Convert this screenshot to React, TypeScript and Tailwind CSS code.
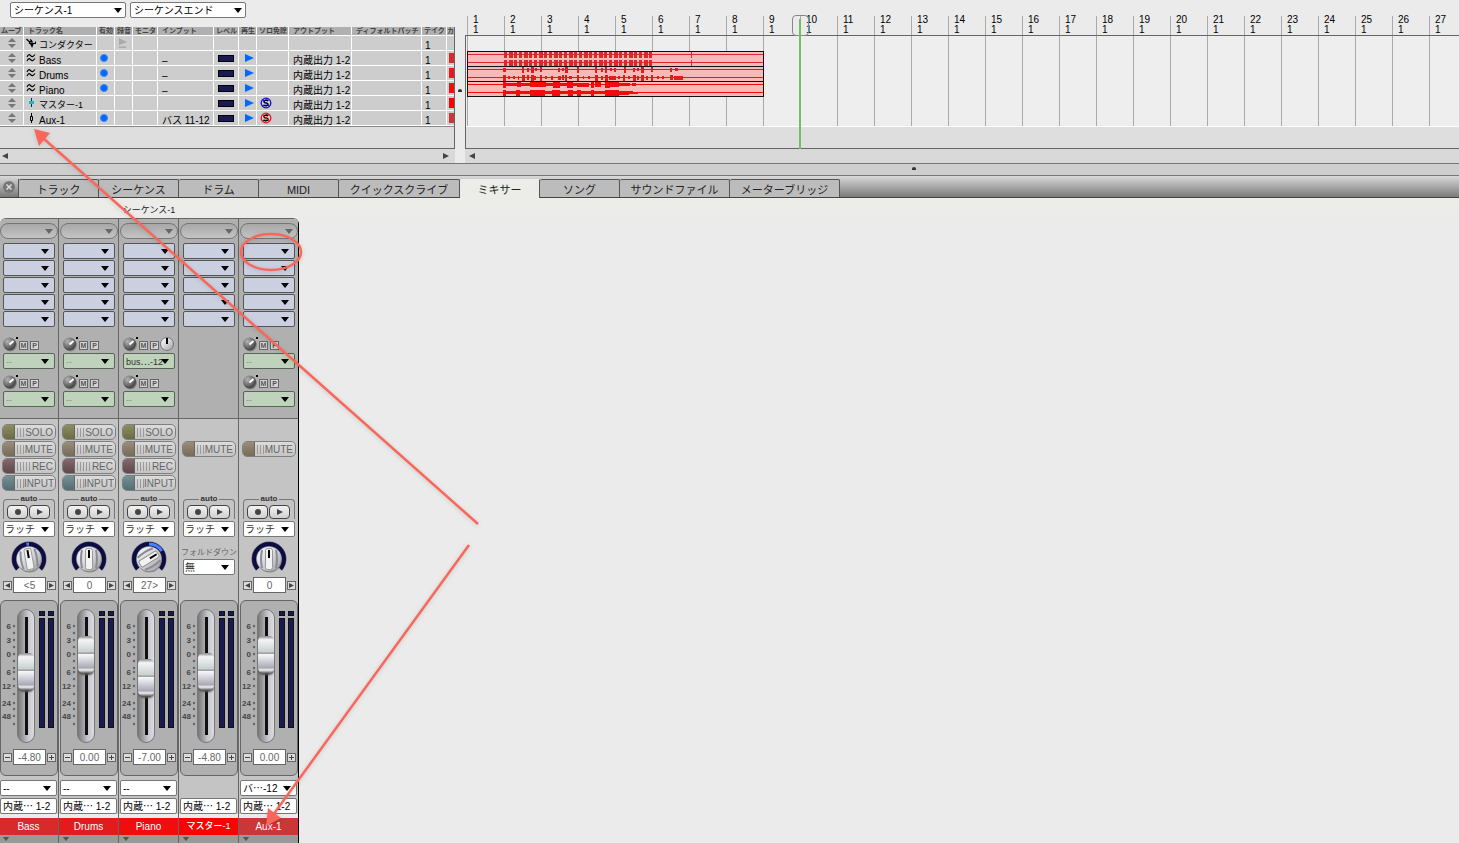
import React from 'react';

type Track = {
  name: string;
  icon: 'conductor' | 'wave' | 'master' | 'aux';
  small?: boolean;
  enabled?: boolean;
  input?: string;
  solo?: string;
  output?: string;
  color?: string;
};

type Strip = {
  name: string;
  small?: boolean;
  color: string;
  sends: string[];
  meterSend?: boolean;
  buttons: string[];
  pan?: { text: string; angle: number };
  fader: number;
  gain: string;
  source?: string;
};

const columns = [
  { label: 'ムーブ', style: 'w-[24px] pl-[1px]' },
  { label: 'トラック名', style: 'w-[73px] pl-[4px]' },
  { label: '有効', style: 'w-[18px] pl-[2px]' },
  { label: '録音', style: 'w-[18px] pl-[2px]' },
  { label: 'モニタ', style: 'w-[25px] pl-[2px]' },
  { label: 'インプット', style: 'w-[56px] pl-[4px]' },
  { label: 'レベル', style: 'w-[25px] pl-[2px]' },
  { label: '再生', style: 'w-[18px] pl-[2px]' },
  { label: 'ソロ免除', style: 'w-[32px] pl-[2px]' },
  { label: 'アウトプット', style: 'w-[63px] pl-[4px]' },
  { label: 'ディフォルトパッチ', style: 'w-[70px] pl-[4px]' },
  { label: 'テイク', style: 'w-[25px] pl-[2px]' },
  { label: 'カ', style: 'w-[7px]' },
];

const tracks: Track[] = [
  { name: 'コンダクター', icon: 'conductor', small: true },
  { name: 'Bass', icon: 'wave', enabled: true, input: '–', output: '内蔵出力 1-2', color: 'bg-[#d82a2a]' },
  { name: 'Drums', icon: 'wave', enabled: true, input: '–', output: '内蔵出力 1-2', color: 'bg-[#e31b1b]' },
  { name: 'Piano', icon: 'wave', enabled: true, input: '–', output: '内蔵出力 1-2', color: 'bg-[#f20d0d]' },
  { name: 'マスター-1', icon: 'master', small: true, solo: '#0a0ae0', output: '内蔵出力 1-2', color: 'bg-[#ff0000]' },
  { name: 'Aux-1', icon: 'aux', enabled: true, input: 'バス 11-12', solo: '#f01010', output: '内蔵出力 1-2', color: 'bg-[#cb3636]' },
];

const tabs = [
  { label: 'トラック', width: 'w-[80px]' },
  { label: 'シーケンス', width: 'w-[80px]' },
  { label: 'ドラム', width: 'w-[80px]' },
  { label: 'MIDI', width: 'w-[80px]' },
  { label: 'クイックスクライブ', width: 'w-[121px]' },
  { label: 'ミキサー', width: 'w-[80px]' },
  { label: 'ソング', width: 'w-[80px]' },
  { label: 'サウンドファイル', width: 'w-[110px]' },
  { label: 'メーターブリッジ', width: 'w-[110px]' },
];

const allButtons = ['SOLO', 'MUTE', 'REC', 'INPUT'];

const strips: Strip[] = [
  { name: 'Bass', color: 'bg-[#d82a2a]', sends: ['--', '--'], buttons: allButtons, pan: { text: '<5', angle: -10 }, fader: 51, gain: '-4.80', source: '--' },
  { name: 'Drums', color: 'bg-[#e31b1b]', sends: ['--', '--'], buttons: allButtons, pan: { text: '0', angle: 0 }, fader: 68, gain: '0.00', source: '--' },
  { name: 'Piano', color: 'bg-[#f20d0d]', sends: ['bus⋯-12', '--'], meterSend: true, buttons: allButtons, pan: { text: '27>', angle: 58 }, fader: 45, gain: '-7.00', source: '--' },
  { name: 'マスター-1', small: true, color: 'bg-[#ff0000]', sends: [], buttons: ['MUTE'], fader: 51, gain: '-4.80' },
  { name: 'Aux-1', color: 'bg-[#cb3636]', sends: ['--', '--'], buttons: ['MUTE'], pan: { text: '0', angle: 0 }, fader: 68, gain: '0.00', source: 'バ⋯-12' },
];

const lamps: Record<string, string> = {
  SOLO: 'from-[#8d8d60] to-[#6c6c44]',
  MUTE: 'from-[#9a8d78] to-[#776b58]',
  REC: 'from-[#86696c] to-[#60474a]',
  INPUT: 'from-[#769196] to-[#536d72]',
};

const ridges: Record<string, number[]> = {
  SOLO: [1, 4, 7],
  MUTE: [1, 4, 7],
  REC: [1, 4, 7, 10, 13],
  INPUT: [1, 4, 7],
};

const measures = Array.from({ length: 27 }, (_, i) => i + 1);

function Triangle({ className }: { className: string }) {
  return (
    <svg className={className} width="8" height="5" viewBox="0 0 8 5" aria-hidden="true">
      <path d="M0 0H8L4 5Z" fill="currentColor" />
    </svg>
  );
}

function Dropdown({
  label,
  value,
  className,
  text = 'text-[10px]',
  arrow = 'text-black right-[6px]',
}: {
  label: string;
  value: string;
  className: string;
  text?: string;
  arrow?: string;
}) {
  return (
    <div className="relative">
      <select aria-label={label} className={`block h-4 w-full appearance-none border pt-[2px] leading-[12px] outline-none ${text} ${className}`}>
        <option>{value}</option>
      </select>
      <Triangle className={`pointer-events-none absolute top-[6px] ${arrow}`} />
    </div>
  );
}

function TrackIcon({ kind }: { kind: Track['icon'] }) {
  return (
    <svg className="mb-[2px] shrink-0" width="10" height="10" viewBox="0 0 10 10" fill="none" aria-hidden="true">
      {kind === 'conductor' && (
        <path d="M0.500 1L3 3.500M6 3V8.500M4 4.500L6 8.500L7.500 5M7 5.500H9.500V3.500M4 1.500L6 3M3.500 3.500H6V5.500H3.500Z" stroke="#000" strokeWidth="1.200" />
      )}
      {kind === 'wave' && (
        <path d="M1 4C3 0 4 2 5 3S7 4 9 1.500M1 8C3 4 4 6 5 7S7 8 9 5.500" stroke="#000" strokeWidth="1.200" />
      )}
      {kind === 'master' && (
        <>
          <path d="M5.500 0V9" stroke="#033" />
          <path d="M3 3H8V6H3Z" fill="#12b8dc" />
        </>
      )}
      {kind === 'aux' && (
        <>
          <path d="M5.500 0V10" stroke="#000" />
          <path d="M4.500 3.500H6.500V7.500H4.500Z" fill="#ccc" stroke="#000" />
        </>
      )}
    </svg>
  );
}

function SoloIcon({ color }: { color: string }) {
  return (
    <svg className="ml-[3px] block" width="12" height="12" viewBox="0 0 12 12" aria-hidden="true">
      <circle cx="6" cy="6" r="4.800" fill="#d8d8d8" stroke={color} strokeWidth="1.300" />
      <path d="M8.400 3.800C6.500 2.600 3.700 3.200 4 4.800S8.100 5.800 8 7.300S5 9 3.400 8" fill="none" stroke="#000" strokeWidth="1.600" />
      <path d="M2.500 2.500L9.500 9.500" stroke={color} />
    </svg>
  );
}

function TrackRow({ track }: { track: Track }) {
  const td = 'h-[15px] border-r border-b border-white p-0 align-bottom';
  const mid = 'h-[15px] border-r border-b border-white p-0 align-middle';
  const audio = track.icon !== 'conductor';
  return (
    <tr>
      <td className={mid}>
        <svg className="mx-auto block" width="8" height="10" viewBox="0 0 8 10" aria-hidden="true">
          <path d="M4 0L8 4H0ZM4 10L8 6H0Z" fill="#777" />
        </svg>
      </td>
      <td className={td}>
        <div className="flex items-end gap-[3px] pl-[2px] whitespace-nowrap">
          <TrackIcon kind={track.icon} />
          <span className={track.small ? 'text-[9px]' : 'text-[10px]'}>{track.name}</span>
        </div>
      </td>
      <td className={mid}>
        {track.enabled && <div className="ml-[3px] size-[8px] rounded-full border border-[#3c86f0] bg-[#0068ff]" />}
      </td>
      <td className={mid}>
        {!audio && (
          <svg className="ml-[4px] block" width="8" height="10" viewBox="0 0 8 10" aria-hidden="true">
            <path d="M0 0L8 4L0 7ZM0 8.500H7V10H0Z" fill="#aaa" />
          </svg>
        )}
      </td>
      <td className={td} />
      <td className={`${td} pl-[4px] whitespace-nowrap`}>{track.input}</td>
      <td className={mid}>
        {audio && <div className="mx-auto h-[7px] w-4 border border-black bg-[#1a1a52]" />}
      </td>
      <td className={mid}>
        {audio && (
          <svg className="ml-[6px] block" width="9" height="8" viewBox="0 0 9 8" aria-hidden="true">
            <path d="M0 0L9 4L0 8Z" fill="#0068ff" />
          </svg>
        )}
      </td>
      <td className={mid}>{track.solo && <SoloIcon color={track.solo} />}</td>
      <td className={`${td} pl-[4px] whitespace-nowrap`}>{track.output}</td>
      <td className={td} />
      <td className={`${td} pl-[3px]`}>1</td>
      <td className="h-[15px] border-b border-white p-0 align-middle">
        {track.color && <div className={`ml-[2px] h-[10px] w-[5px] ${track.color}`} />}
      </td>
    </tr>
  );
}

function TrackList() {
  return (
    <section className="w-[455px] shrink-0">
      <div className="flex h-[27px] gap-1 pt-[2px] pl-[10px]">
        <div className="w-[116px]">
          <Dropdown label="シーケンス" value="シーケンス-1" className="rounded-xs border-[#777] bg-white pl-[3px]" arrow="text-black right-[4px]" />
        </div>
        <div className="w-[116px]">
          <Dropdown label="位置" value="シーケンスエンド" className="rounded-xs border-[#777] bg-white pl-[3px]" arrow="text-black right-[4px]" />
        </div>
      </div>
      <div className="border-r border-b border-[#666] bg-[#dedede]">
        <table className="w-full table-fixed border-separate border-spacing-0 bg-[#cdcdcd] text-[10px] leading-[9px]">
          <thead>
            <tr className="bg-[#b0b0b0]">
              {columns.map((c) => (
                <th
                  key={c.label}
                  className={`h-[9px] border-r border-b border-white py-0 pr-0 text-left text-[7px] leading-[8px] font-bold whitespace-nowrap text-[#444] last:border-r-0 last:pl-0 ${c.style}`}
                >
                  {c.label}
                </th>
              ))}
            </tr>
          </thead>
          <tbody>
            {tracks.map((t) => (
              <TrackRow key={t.name} track={t} />
            ))}
          </tbody>
        </table>
        <div className="h-[22px] border-t border-[#888]" />
      </div>
      <div className="flex h-[14px] items-center justify-between bg-[#d9d9d9] pr-[6px] pl-[2px]">
        <button aria-label="左へスクロール" className="block">
          <svg className="block" width="6" height="6" viewBox="0 0 6 6"><path d="M6 0V6L0 3Z" fill="#444" /></svg>
        </button>
        <button aria-label="右へスクロール" className="block">
          <svg className="block" width="6" height="6" viewBox="0 0 6 6"><path d="M0 0V6L6 3Z" fill="#444" /></svg>
        </button>
      </div>
    </section>
  );
}

// [x, width, height] of every hit in a channel
const bassHits = Array.from({ length: 30 }, (_, i) => [37 + i * 5, i % 3 === 1 ? 4 : 3, i % 2 ? 6 : 8]);
const drumsTop = [
  [36, 3, 4], [55, 2, 6], [60, 2, 4], [64, 3, 7], [68, 2, 3], [73, 2, 5], [91, 2, 4], [95, 2, 3], [98, 3, 6], [110, 2, 6],
  [128, 2, 7], [134, 2, 4], [138, 2, 6], [143, 2, 3], [147, 2, 4], [157, 2, 6], [166, 2, 4], [170, 2, 3], [174, 3, 6],
  [184, 2, 5], [203, 2, 4], [208, 3, 3],
];
const drumsLow = [
  [36, 3, 6], [41, 2, 3], [46, 2, 3], [51, 1, 4], [55, 3, 7], [60, 2, 5], [64, 3, 8], [67, 2, 4], [73, 2, 6], [78, 2, 3],
  [84, 2, 4], [91, 3, 4], [95, 2, 5], [98, 2, 8], [102, 3, 3], [110, 2, 7], [116, 1, 3], [121, 2, 3], [128, 3, 7], [134, 2, 4],
  [138, 3, 6], [142, 7, 4], [151, 2, 3], [156, 2, 7], [161, 2, 3], [166, 3, 6], [170, 2, 4], [174, 3, 8], [179, 2, 4],
  [184, 2, 6], [190, 2, 3], [195, 2, 3], [203, 3, 5], [207, 9, 4],
];
const pianoTop = [
  [36, 86, 3], [36, 3, 6], [50, 4, 5], [63, 7, 5], [70, 9, 5], [86, 7, 6], [100, 6, 6], [110, 12, 4], [124, 3, 6], [128, 6, 5],
  [138, 5, 7], [143, 9, 5], [152, 11, 3], [165, 4, 3],
];
const pianoLow = [
  [36, 130, 3], [36, 3, 6], [49, 4, 6], [63, 4, 8], [67, 11, 7], [85, 8, 7], [101, 5, 6], [110, 4, 6], [124, 3, 6],
  [138, 5, 8], [143, 9, 6], [152, 10, 4], [162, 9, 2],
];

const clips = [
  { color: '#d82a2a', top: [...bassHits, [224, 1, 7]], low: [...bassHits, [224, 1, 7]] },
  { color: '#e31b1b', top: drumsTop, low: drumsLow },
  { color: '#f20d0d', top: pianoTop, low: pianoLow },
];

function Clips() {
  return (
    <svg className="absolute top-[15px] left-[1px]" width="297" height="46" viewBox="0 0 297 46" shapeRendering="crispEdges" aria-label="オーディオクリップ">
      {clips.map((clip, i) => (
        <g key={clip.color} transform={`translate(0 ${i * 15})`}>
          <rect x="0.500" y="0.500" width="296" height="15" fill="#f8b9b9" stroke="#111" />
          {[clip.top, clip.low].map((hits, ch) => (
            <g key={ch} transform={`translate(0 ${ch ? 11 : 3})`} fill={clip.color}>
              <rect x="1" y="0" width="295" height="1" />
              {hits.map(([x, w, h], n) => (
                <rect key={n} x={x} y={Math.max(-2, 1 - Math.ceil(h / 2))} width={w} height={Math.min(h, 6)} />
              ))}
            </g>
          ))}
        </g>
      ))}
    </svg>
  );
}

function Timeline() {
  return (
    <section className="relative min-w-0 flex-1 overflow-hidden">
      <div className="flex h-[35px] items-end pl-[2px]">
        {measures.map((m) => (
          <div key={m} className="flex h-[19px] w-[37px] shrink-0 flex-col justify-end border-l border-[#aaa] pl-[5px] text-[10px] leading-[10px]">
            <span>{m}</span>
            <span>1</span>
          </div>
        ))}
      </div>
      <div className="border-y border-l border-[#666] bg-[#dedede]">
        <div className="relative flex h-[90px] overflow-hidden bg-[#eeeeee] pl-[1px]">
          {measures.map((m) => (
            <div key={m} className="w-[37px] shrink-0 border-l border-[#aaa]" />
          ))}
          <Clips />
        </div>
        <div className="h-[22px] border-t border-white" />
      </div>
      <div className="flex h-[14px] items-center bg-[#d9d9d9] pl-[4px]">
        <button aria-label="左へスクロール" className="block">
          <svg className="block" width="6" height="6" viewBox="0 0 6 6"><path d="M6 0V6L0 3Z" fill="#444" /></svg>
        </button>
      </div>
      <div className="absolute top-[15px] left-[327px] h-[21px] w-[17px] rounded-sm border border-[#888]" />
      <div className="absolute top-[19px] left-[334px] h-[130px] w-[2px] bg-[#6fc25a]" />
    </section>
  );
}

function TabBar() {
  return (
    <nav className="flex h-[22px] items-end border-b border-[#444] bg-linear-to-b from-[#dadada] to-[#7b7b7b]">
      <button aria-label="閉じる" className="mb-[4px] ml-[3px] flex w-[15px] shrink-0">
        <svg width="12" height="12" viewBox="0 0 12 12">
          <circle cx="6" cy="6" r="6" fill="#777" />
          <path d="M3.500 3.500L8.500 8.500M8.500 3.500L3.500 8.500" stroke="#ddd" strokeWidth="1.500" />
        </svg>
      </button>
      <div role="tablist" className="flex border-l border-[#555]">
        {tabs.map((t) => (
          <button
            key={t.label}
            role="tab"
            aria-selected={t.label === 'ミキサー'}
            className={`${t.width} shrink-0 rounded-t-xs border-t border-r pt-px text-[11px] leading-[18px] text-[#222] ${
              t.label === 'ミキサー' ? '-mb-px h-[19px] border-t-[#ecede8] border-r-[#555] bg-[#ecede8]' : 'h-[18px] border-[#555] bg-[#bcbcbc]'
            }`}
          >
            {t.label}
          </button>
        ))}
      </div>
    </nav>
  );
}

function Send({ value, meter }: { value: string; meter: boolean }) {
  const box = 'mt-[4px] flex size-[9px] items-center justify-center border border-[#666] bg-[#d4d4d4] text-[7px] leading-none font-bold text-[#555]';
  return (
    <div className="w-[52px]">
      <div className="flex h-4 gap-[2px]">
        <svg className="-mr-px block" width="15" height="15" viewBox="0 0 15 15" aria-hidden="true">
          <circle cx="7.500" cy="8" r="6.500" fill="#888" />
          <circle cx="6.500" cy="7" r="6.500" fill="url(#knob)" />
          <path d="M6.500 7.500L10.500 4" stroke="#fff" strokeWidth="2" />
          <rect x="13" y="0" width="2" height="2" fill="#000" />
        </svg>
        <button className={box}>M</button>
        <button className={box}>P</button>
        {meter && (
          <svg className="-ml-px block" width="14" height="14" viewBox="0 0 14 14" aria-hidden="true">
            <circle cx="7" cy="7" r="6.500" fill="url(#dial)" stroke="#777" />
            <path d="M7 1V7" stroke="#000" strokeWidth="2" />
          </svg>
        )}
      </div>
      <Dropdown
        label="センド"
        value={value}
        text="text-[9px]"
        className={`rounded-xs border-[#556655] bg-[#bfd2bb] pl-[2px] ${value === '--' ? 'text-[#8a988a]' : 'text-[#333]'}`}
      />
    </div>
  );
}

function ChannelButton({ label }: { label: string }) {
  return (
    <button className="flex h-4 w-[54px] items-stretch overflow-hidden rounded-[5px] border border-[#808080] bg-linear-to-b from-[#dcdcdc] to-[#c4c4c4]">
      <span className={`w-[12px] shrink-0 border-r border-[#666] bg-linear-to-b ${lamps[label]}`} />
      <svg className="shrink-0 self-center" width={label === 'REC' ? 16 : 9} height="9" aria-hidden="true">
        {ridges[label].map((x) => (
          <path key={x} d={`M${x + 1.500} 0V9`} stroke="#999" />
        ))}
      </svg>
      <span className="flex-1 self-center pt-px pr-[2px] text-right text-[10px] leading-[13px] text-[#666]">{label}</span>
    </button>
  );
}

function AutoGroup() {
  const button = 'flex h-[14px] w-[21px] items-center justify-center rounded-sm border border-[#444] bg-linear-to-b from-[#f2f2f2] to-[#d0d0d0]';
  return (
    <fieldset className="mx-[3px] mt-[4px] h-[24px] w-[52px] min-w-0 rounded-t-sm border border-b-0 border-[#777] px-[3px]">
      <legend className="mx-auto px-[2px] text-[8px] leading-[8px] font-bold text-[#333]">auto</legend>
      <div className="flex gap-px pt-[2px]">
        <button aria-label="オート録音" className={button}>
          <svg width="6" height="6" viewBox="0 0 6 6"><circle cx="3" cy="3" r="3" fill="#444" /></svg>
        </button>
        <button aria-label="オート再生" className={button}>
          <svg width="6" height="6" viewBox="0 0 6 6"><path d="M0 0L6 3L0 6Z" fill="#444" /></svg>
        </button>
      </div>
    </fieldset>
  );
}

function arc(from: number, to: number) {
  const point = (deg: number) => {
    const rad = ((deg - 90) * Math.PI) / 180;
    return `${18 + 15 * Math.cos(rad)} ${18 + 15 * Math.sin(rad)}`;
  };
  return `M${point(from)}A15 15 0 ${to - from > 180 ? 1 : 0} 1 ${point(to)}`;
}

function Dial({ angle }: { angle: number }) {
  return (
    <svg className="mx-auto block" width="36" height="34" viewBox="0 0 36 34" aria-hidden="true">
      <path d={arc(-132, 132)} fill="none" stroke="#5b6478" strokeWidth="5" />
      <path d={arc(-131, 131)} fill="none" stroke="#0d0d42" strokeWidth="4" />
      {angle !== 0 && <path d={arc(Math.min(angle, 0), Math.max(angle, 0))} fill="none" stroke="#4a80ff" strokeWidth="3" />}
      <circle cx="18.500" cy="19.500" r="12" fill="#8a8a8a" />
      <circle cx="18" cy="18" r="12" fill="url(#dial)" />
      <g transform={`rotate(${angle} 18 18)`}>
        <path d="M11 9Q9 18 11 27M25 9Q27 18 25 27" fill="none" stroke="#8b8b98" strokeWidth="2" />
        <rect x="14.500" y="7.500" width="7" height="21" rx="2" fill="#f2f2f2" stroke="#999" />
        <path d="M18 9V17" stroke="#000" strokeWidth="2" />
      </g>
    </svg>
  );
}

function Stepper({ label, value, kind }: { label: string; value: string; kind: 'pan' | 'gain' }) {
  const box = 'block size-[9px] shrink-0 border border-[#666] bg-[#dcdcdc]';
  return (
    <div className="flex items-center gap-px">
      <button aria-label={`${label} 下げる`} className={box}>
        <svg className="block" width="7" height="7" viewBox="0 0 7 7">
          <path d={kind === 'pan' ? 'M6 1V6L1 3.500Z' : 'M1 3H6V4H1Z'} fill="#444" />
        </svg>
      </button>
      <input
        aria-label={label}
        defaultValue={value}
        className="h-4 w-[33px] border border-[#666] bg-white text-center text-[10px] leading-[14px] text-[#666] outline-none"
      />
      <button aria-label={`${label} 上げる`} className={box}>
        <svg className="block" width="7" height="7" viewBox="0 0 7 7">
          <path d={kind === 'pan' ? 'M1 1V6L6 3.500Z' : 'M1 3H3V1H4V3H6V4H4V6H3V4H1Z'} fill="#444" />
        </svg>
      </button>
    </div>
  );
}

const scaleMarks: [string, number][] = [['6', 17], ['3', 31], ['0', 45], ['6', 63], ['12', 77], ['24', 94], ['48', 107]];
const scaleDots = [17, 24, 31, 38, 45, 52, 59, 63, 70, 77, 85, 94, 100, 107, 115];

function FaderPanel({ strip }: { strip: Strip }) {
  return (
    <div className="mt-[7px] h-[176px] rounded-md border border-[#666] bg-[#b0b0b0] pt-2">
      <div className="flex">
        <svg width="16" height="134" viewBox="0 0 16 134" aria-hidden="true">
          {scaleMarks.map(([text, y]) => (
            <text key={y} x="10" y={y + 3} textAnchor="end" fontSize="8" fontWeight="bold" fill="#444">
              {text}
            </text>
          ))}
          {scaleDots.map((y) => (
            <circle key={y} cx="13" cy={y} r="1.200" fill="#666" />
          ))}
        </svg>
        <div className="h-[134px] w-[18px] overflow-hidden rounded-full border border-[#777] bg-linear-to-r from-[#777] via-[#c4c4cb] via-60% to-[#dcdce4] pt-px">
          <input
            type="range"
            aria-label={`${strip.name} フェーダー`}
            min={0}
            max={93}
            defaultValue={strip.fader}
            className="block h-[130px] w-4 appearance-none rounded-full bg-[linear-gradient(90deg,transparent_7px,#111_7px,#111_10px,transparent_10px)] bg-[length:100%_118px] bg-center bg-no-repeat [direction:rtl] [writing-mode:vertical-lr] [&::-webkit-slider-thumb]:h-[37px] [&::-webkit-slider-thumb]:w-4 [&::-webkit-slider-thumb]:appearance-none [&::-webkit-slider-thumb]:rounded-[5px] [&::-webkit-slider-thumb]:bg-[linear-gradient(#888,#f4f4f6_10%,#c6d0ce_44%,#77777f_46%,#f6f6fa_50%,#a9a9b6_86%,#f0f0f0_92%,#666)] [&::-webkit-slider-thumb]:shadow-[0_2px_2px_#555]"
          />
        </div>
        <div className="ml-[4px] flex gap-[3px] pt-[2px]">
          {[0, 1].map((ch) => (
            <div key={ch} className="flex w-[6px] flex-col gap-[2px]">
              <div className="h-[5px] border border-[#111] bg-[#1a1a52]" />
              <div className="h-[110px] border border-[#111] bg-[#1a1a52]" />
            </div>
          ))}
        </div>
      </div>
      <div className="mt-[6px] pl-[2px]">
        <Stepper label={`${strip.name} ゲイン`} value={strip.gain} kind="gain" />
      </div>
    </div>
  );
}

function ChannelStrip({ strip }: { strip: Strip }) {
  return (
    <article className="w-[60px] border-r border-[#666] pl-px first:w-[59px] first:pl-0 last:border-black">
      <div className="-ml-px border-b border-[#666] bg-[#b0b0b0] pt-[4px] pl-px">
        <Dropdown
          label="プリセット"
          value=""
          className="rounded-full border-[#777] bg-linear-to-b from-[#a8a8a8] to-[#c4c4c4]"
          arrow="text-[#666] right-[5px]"
        />
        <div className="mt-[4px] flex flex-col gap-px px-[3px]">
          {[1, 2, 3, 4, 5].map((n) => (
            <Dropdown key={n} label={`インサート ${n}`} value="" className="rounded-xs border-[#555] bg-[#cbd0e0]" />
          ))}
        </div>
        <div className="mt-[10px] flex h-[81px] flex-col gap-[6px] pl-[3px]">
          {strip.sends.map((s, i) => (
            <Send key={i} value={s} meter={i === 0 && !!strip.meterSend} />
          ))}
        </div>
      </div>
      <div className="-ml-px bg-[#c4c4c4] pt-[5px] pl-px">
        <div className="flex flex-col gap-px pl-[2px]">
          {allButtons.map((b) => (
            <div key={b} className="h-4">
              {strip.buttons.includes(b) && <ChannelButton label={b} />}
            </div>
          ))}
        </div>
        <AutoGroup />
        <div className="mt-[2px] px-[3px]">
          <Dropdown label="オートメーションモード" value="ラッチ" className="rounded-xs border-[#777] bg-white pl-px text-[#333]" />
        </div>
        <div className="mt-[4px] h-[52px]">
          {strip.pan ? (
            <>
              <Dial angle={strip.pan.angle} />
              <div className="mt-[2px] pl-[3px]">
                <Stepper label={`${strip.name} パン`} value={strip.pan.text} kind="pan" />
              </div>
            </>
          ) : (
            <>
              <p className="pt-[6px] text-center text-[8px] leading-[12px] whitespace-nowrap text-[#666]">フォルドダウン</p>
              <div className="px-[3px]">
                <Dropdown label="フォルドダウン" value="無" className="rounded-xs border-[#777] bg-white pl-px text-[#333]" />
              </div>
            </>
          )}
        </div>
        <FaderPanel strip={strip} />
        <div className="mt-[4px] h-4 pr-px">
          {strip.source && <Dropdown label="インプット" value={strip.source} className="rounded-xs border-[#777] bg-white pl-[2px]" />}
        </div>
        <div className="mt-[2px] mb-[4px] pr-px">
          <button className="block h-4 w-full rounded-xs border border-[#777] bg-white pt-px pl-[2px] text-left text-[10px] leading-[13px] whitespace-nowrap">
            内蔵⋯ 1-2
          </button>
        </div>
      </div>
      <h2 className={`-ml-px h-[17px] text-center leading-[17px] font-medium text-white ${strip.small ? 'text-[9px]' : 'text-[10px]'} ${strip.color}`}>
        {strip.name}
      </h2>
      <div className="-ml-px h-[8px] bg-[#999] pt-[2px] pl-[3px] text-[#555]">
        <Triangle className="block h-[4px]" />
      </div>
    </article>
  );
}

function Mixer() {
  return (
    <main className="flex-1 bg-linear-to-b from-[#ecede8] to-[#ebebeb] to-[20px]">
      <h1 className="h-[20px] w-[298px] pt-[4px] text-center text-[9px] leading-4 text-[#222]">シーケンス-1</h1>
      <div className="flex w-[299px] overflow-hidden rounded-t-md border-t border-[#666]">
        {strips.map((s) => (
          <ChannelStrip key={s.name} strip={s} />
        ))}
      </div>
    </main>
  );
}

// Red arrows and ring laid over the whole window
function Annotations() {
  return (
    <svg className="pointer-events-none absolute top-0 left-0 drop-shadow-sm" width="500" height="843" viewBox="0 0 500 843" aria-hidden="true">
      <g fill="none" stroke="#f9675a" strokeWidth="2.500">
        <path d="M43 138L478 524" />
        <path d="M469 545L273 815" />
        <ellipse cx="271" cy="252" rx="30" ry="18" />
      </g>
      <path d="M34 129L50 133L39 146ZM266 826L268 808L281 818Z" fill="#f9675a" />
    </svg>
  );
}

function App() {
  return (
    <div className="relative flex min-h-screen flex-col overflow-hidden bg-[#ebebeb] font-['Liberation_Sans','Noto_Sans_CJK_JP',sans-serif] text-black">
      <svg className="absolute size-0" aria-hidden="true">
        <defs>
          <radialGradient id="knob" cx="0.35" cy="0.3" r="0.8">
            <stop offset="0" stopColor="#b4b4b4" />
            <stop offset="1" stopColor="#333" />
          </radialGradient>
          <linearGradient id="dial" x1="0" y1="0" x2="1" y2="1">
            <stop offset="0" stopColor="#ffffff" />
            <stop offset="0.5" stopColor="#d4d4d8" />
            <stop offset="1" stopColor="#9a9aa0" />
          </linearGradient>
        </defs>
      </svg>
      <div className="flex">
        <TrackList />
        <div className="flex w-[10px] shrink-0 items-center justify-center pt-[18px]">
          <div className="h-[3px] w-[4px] rounded-t-full bg-[#333]" />
        </div>
        <Timeline />
      </div>
      <div className="flex h-[13px] justify-center border-y border-[#777] bg-[#cecece] pt-[3px] pl-[369px]">
        <div className="h-[3px] w-[4px] rounded-t-full bg-[#333]" />
      </div>
      <TabBar />
      <Mixer />
      <Annotations />
    </div>
  );
}

export default App;
